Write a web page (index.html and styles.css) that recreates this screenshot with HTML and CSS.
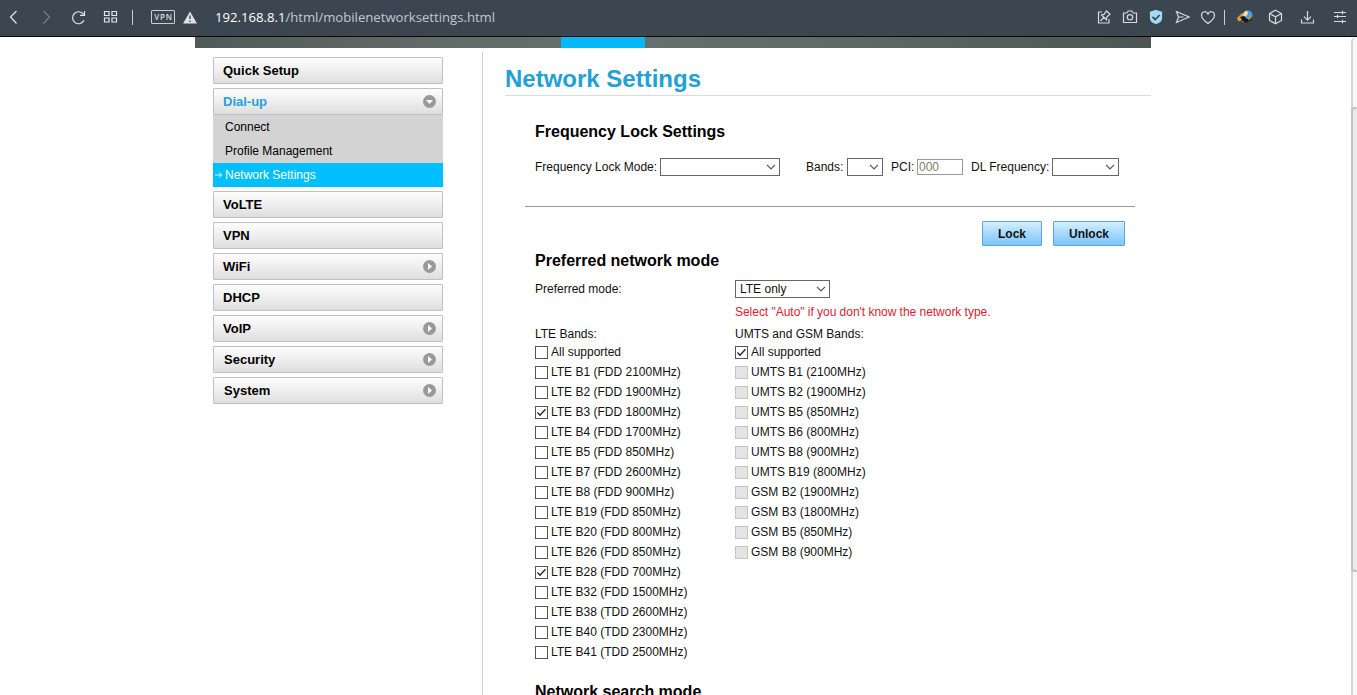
FILE: index.html
```html
<!DOCTYPE html>
<html lang="en">
<head>
<meta charset="utf-8">
<title>Network Settings</title>
<link rel="stylesheet" href="styles.css">
</head>
<body>
<header class="toolbar">
  <div class="nav">
    <svg class="ico" viewBox="0 0 16 16"><path d="M10.5 2 4.500 8l6 6.500"/></svg>
    <svg class="ico off" viewBox="0 0 16 16"><path d="M5.500 2l6 6-6 6.500"/></svg>
    <svg class="ico" viewBox="0 0 16 16"><path d="M14 11.300A6 6 0 1 1 13.500 5.300M14.500 2v4.300h-4.500"/></svg>
    <svg class="ico grid" viewBox="0 0 16 16"><path d="M2.500 2.500h4.500v4h-4.500zM10 2.500h4.500v4H10zM2.500 9h4.500v4h-4.500zM10 9h4.500v4H10z"/></svg>
  </div>
  <i class="bar"></i>
  <span class="vpn">VPN</span>
  <svg class="ico warn" viewBox="0 0 16 16"><path d="M8 2.500 15 14.500H1z" fill="#dde1e4" stroke="none"/><path d="M8 6.500v3.500M8 11.500v1.500" stroke="#56606a" stroke-width="1.600"/></svg>
  <span class="url"><b>192.168.8.1</b>/html/mobilenetworksettings.html</span>
  <div class="actions">
    <svg class="ico" viewBox="0 0 16 16"><path d="M6 3H2.500v11H13v-4M4.500 12l3.500-3.800M5.500 6l5 4.700 .3-2.700 3.200-2.800L10.500 2 8 5.400z"/></svg>
    <svg class="ico" viewBox="0 0 16 16"><path d="M1.500 4h3.200l1.500-2h3.600l1.500 2h3.200v9.500H1.500z"/><circle cx="8" cy="8.300" r="2.700"/></svg>
    <svg class="ico" viewBox="0 0 16 16"><path d="M8 1.500l5.500 1.700v6c0 3-2.500 4.300-5.500 5.300-3-1-5.500-2.300-5.500-5.300v-6z" fill="#a5daf7" stroke="#a5daf7"/><path d="M4.500 7.800l2.700 2.700 4.500-4.500" stroke="#354451" stroke-width="1.700"/></svg>
    <svg class="ico" viewBox="0 0 16 16"><path d="M2.500 2.500l12.500 5.500L2.500 13.500l2-5.500zM4.500 8h5"/></svg>
    <svg class="ico" viewBox="0 0 16 16"><path d="M8 14.500C4.500 12 1.500 9.500 1.500 6.500c0-4.500 5-5 6.500-1.500 1.500-3.500 6.500-3 6.500 1.500 0 3-3 5.500-6.500 8z"/></svg>
    <i class="bar"></i>
    <svg class="ico ext" viewBox="0 0 16 16"><g stroke="none"><path d="M0 9l5-5 4 1v4l-3 4-5-1z" fill="#e39b38"/><circle cx="11" cy="6" r="4.500" fill="#4b9fdc"/><path d="M7 3l3-1.500 1 3-2 3-3-1z" fill="#f5deb4"/><path d="M3 8l4-1 3 3 5-2v3l-4 1-1 2-4-2-4 1 3-2z" fill="#161719"/><path d="M11 8l4-1-1 3-3 1z" fill="#c48a3a"/></g></svg>
    <svg class="ico cube" viewBox="0 0 16 16"><path d="M8.500 1.300l6 3.200v7l-6 3.200-6-3.200v-7zM2.500 4.500l6 3.300 6-3.300M8.500 7.800v6.500"/></svg>
    <svg class="ico dl" viewBox="0 0 16 16"><path d="M8.500 2v9M5 7.700l3.500 3.500L12 7.700M2.500 10.500v3.500h12v-3.500"/></svg>
    <svg class="ico menu" viewBox="0 0 16 16"><path d="M2 3.500h12M2 7.500h12M2 12.500h12M10.500 1.800v3.400M5.500 5.800v3.400M10.500 10.800v3.400"/></svg>
  </div>
</header>

<div class="viewport">
  <div class="page">
    <div class="strip"><div class="tab"></div></div>
    <div class="columns">
      <nav class="side">
        <div class="item">Quick Setup</div>
        <div class="group">
          <div class="item open">Dial-up<svg class="arrow" viewBox="0 0 13 13"><circle cx="6.500" cy="6.500" r="6.500"/><path d="M3 5h7L6.500 9z"/></svg></div>
          <div class="sub">Connect</div>
          <div class="sub">Profile Management</div>
          <div class="sub active"><svg class="pointer" viewBox="0 0 9 8"><path d="M0 4h7.500M4.500 1l3 3-3 3"/></svg>Network Settings</div>
        </div>
        <div class="item">VoLTE</div>
        <div class="item">VPN</div>
        <div class="item">WiFi<svg class="arrow" viewBox="0 0 13 13"><circle cx="6.500" cy="6.500" r="6.500"/><path d="M5 3v7l4-3.500z"/></svg></div>
        <div class="item">DHCP</div>
        <div class="item">VoIP<svg class="arrow" viewBox="0 0 13 13"><circle cx="6.500" cy="6.500" r="6.500"/><path d="M5 3v7l4-3.500z"/></svg></div>
        <div class="item in">Security<svg class="arrow" viewBox="0 0 13 13"><circle cx="6.500" cy="6.500" r="6.500"/><path d="M5 3v7l4-3.500z"/></svg></div>
        <div class="item in">System<svg class="arrow" viewBox="0 0 13 13"><circle cx="6.500" cy="6.500" r="6.500"/><path d="M5 3v7l4-3.500z"/></svg></div>
      </nav>
      <main class="main">
        <h1>Network Settings</h1>
        <h2 class="freq">Frequency Lock Settings</h2>
        <div class="lockrow">
          <span class="w-mode">Frequency Lock Mode:</span>
          <div class="select s-mode"><svg viewBox="0 0 10 6"><path d="M1 .8l4 4 4-4"/></svg></div>
          <span class="w-bands">Bands:</span>
          <div class="select s-bands"><svg viewBox="0 0 10 6"><path d="M1 .8l4 4 4-4"/></svg></div>
          <span class="w-pci">PCI:</span>
          <div class="pci">000</div>
          <span class="w-dl">DL Frequency:</span>
          <div class="select s-dl"><svg viewBox="0 0 10 6"><path d="M1 .8l4 4 4-4"/></svg></div>
        </div>
        <div class="buttons"><div class="btn lock">Lock</div><div class="btn unlock">Unlock</div></div>
        <h2 class="pref">Preferred network mode</h2>
        <div class="two mode">
          <span>Preferred mode:</span>
          <div class="select s-lte">LTE only<svg viewBox="0 0 10 6"><path d="M1 .8l4 4 4-4"/></svg></div>
        </div>
        <div class="hint">Select "Auto" if you don't know the network type.</div>
        <div class="two bands">
          <div>
            <div class="cap">LTE Bands:</div>
            <div class="opt"><i class="box"></i>All supported</div>
            <div class="opt"><i class="box"></i>LTE B1 (FDD 2100MHz)</div>
            <div class="opt"><i class="box"></i>LTE B2 (FDD 1900MHz)</div>
            <div class="opt"><i class="box"><svg viewBox="0 0 11 11"><path d="M1.500 5.500L4 8.300 9.500 2.300"/></svg></i>LTE B3 (FDD 1800MHz)</div>
            <div class="opt"><i class="box"></i>LTE B4 (FDD 1700MHz)</div>
            <div class="opt"><i class="box"></i>LTE B5 (FDD 850MHz)</div>
            <div class="opt"><i class="box"></i>LTE B7 (FDD 2600MHz)</div>
            <div class="opt"><i class="box"></i>LTE B8 (FDD 900MHz)</div>
            <div class="opt"><i class="box"></i>LTE B19 (FDD 850MHz)</div>
            <div class="opt"><i class="box"></i>LTE B20 (FDD 800MHz)</div>
            <div class="opt"><i class="box"></i>LTE B26 (FDD 850MHz)</div>
            <div class="opt"><i class="box"><svg viewBox="0 0 11 11"><path d="M1.500 5.500L4 8.300 9.500 2.300"/></svg></i>LTE B28 (FDD 700MHz)</div>
            <div class="opt"><i class="box"></i>LTE B32 (FDD 1500MHz)</div>
            <div class="opt"><i class="box"></i>LTE B38 (TDD 2600MHz)</div>
            <div class="opt"><i class="box"></i>LTE B40 (TDD 2300MHz)</div>
            <div class="opt"><i class="box"></i>LTE B41 (TDD 2500MHz)</div>
          </div>
          <div>
            <div class="cap">UMTS and GSM Bands:</div>
            <div class="opt"><i class="box"><svg viewBox="0 0 11 11"><path d="M1.500 5.500L4 8.300 9.500 2.300"/></svg></i>All supported</div>
            <div class="opt"><i class="box dis"></i>UMTS B1 (2100MHz)</div>
            <div class="opt"><i class="box dis"></i>UMTS B2 (1900MHz)</div>
            <div class="opt"><i class="box dis"></i>UMTS B5 (850MHz)</div>
            <div class="opt"><i class="box dis"></i>UMTS B6 (800MHz)</div>
            <div class="opt"><i class="box dis"></i>UMTS B8 (900MHz)</div>
            <div class="opt"><i class="box dis"></i>UMTS B19 (800MHz)</div>
            <div class="opt"><i class="box dis"></i>GSM B2 (1900MHz)</div>
            <div class="opt"><i class="box dis"></i>GSM B3 (1800MHz)</div>
            <div class="opt"><i class="box dis"></i>GSM B5 (850MHz)</div>
            <div class="opt"><i class="box dis"></i>GSM B8 (900MHz)</div>
          </div>
        </div>
        <h2 class="search">Network search mode</h2>
      </main>
    </div>
  </div>
  <div class="scroll"><div class="thumb"></div></div>
</div>
</body>
</html>
```

FILE: styles.css
```css
* { box-sizing: border-box; }
html, body { margin: 0; height: 695px; overflow: hidden; background: #fff; }
body { font: 12px/16px "Liberation Sans", Arial, sans-serif; color: #111; display: flex; flex-direction: column; }

/* browser toolbar */
.toolbar { flex: none; height: 37px; background: #3c4650; border-bottom: 1px solid #080a0c; display: flex; align-items: center; padding: 0 9px 2px 6px; }
.ico { width: 16px; height: 16px; flex: none; display: block; fill: none; stroke: #e2e6e9; stroke-width: 1.2; }
.off { stroke: #76808a; }
.nav { display: flex; gap: 16px; }
.bar { width: 1px; height: 15px; background: #c9ced2; flex: none; }
.nav + .bar { margin-left: 14px; }
.vpn { margin-left: 18px; width: 24px; height: 14px; border: 1px solid #c9ced2; border-radius: 1px; color: #d5dadd; font: 600 8px/12px "Open Sans", sans-serif; letter-spacing: .7px; text-align: center; padding-left: 1px; }
.warn { margin-left: 7px; }
.url { margin-left: 17px; font: 13.14px/18px "Open Sans", sans-serif; color: #c3c9ce; white-space: nowrap; }
.url b { font-weight: 400; color: #fff; }
.actions { margin-left: auto; display: flex; align-items: center; gap: 10px; }
.actions .ico { stroke: #d5dadd; }
.actions .bar { margin-left: -2px; }
.ext { margin-left: 2px; }
.cube { margin-left: 4px; }
.dl { margin-left: 6px; }
.menu { margin-left: 7px; }

.viewport { flex: 1; min-height: 0; display: flex; justify-content: space-between; overflow: hidden; }
.page { width: 956px; margin-left: 195px; }
.strip { height: 11px; background: linear-gradient(90deg, #505a59, #626b69 25%, #67706e 45%, #626a69 65%, #4c5554); }
.tab { width: 84px; height: 11px; margin-left: 366px; background: #05b9f8; }
.columns { display: flex; margin-top: 4px; height: 643px; }

/* side menu */
.side { width: 288px; border-right: 1px solid #ccc; padding: 5px 39px 0 18px; display: flex; flex-direction: column; gap: 4px; }
.item { height: 27px; border: 1px solid #c0c0c0; border-radius: 1px; background: linear-gradient(#fdfdfd, #f0f0f0 45%, #dedede); padding: 0 6px 0 9px; font: bold 13px/25px "Liberation Sans", Arial, sans-serif; color: #000; display: flex; justify-content: space-between; align-items: center; }
.item.in { padding-left: 10px; }
.item.open { color: #26a0da; }
.arrow { width: 13px; height: 13px; fill: #999; }
.arrow path { fill: #fff; }
.sub { height: 24px; line-height: 24px; background: #d3d3d3; padding-left: 12px; color: #000; }
.sub.active { background: #00bfff; color: #fff; padding-left: 2px; display: flex; align-items: center; gap: 2px; }
.pointer { width: 8px; height: 8px; fill: none; stroke: #fff; stroke-width: 1; }

/* content */
.main { width: 668px; padding-left: 22px; }
h1, h2 { margin: 0; font-weight: bold; color: #000; white-space: nowrap; }
h1 { height: 44px; padding-top: 11px; font-size: 24px; line-height: 32px; color: #23a0d4; border-bottom: 1px solid #ddd; }
h2 { margin-left: 30px; font-size: 16px; line-height: 20px; }
.freq { margin-top: 26px; }
.lockrow { margin: 0 16px 0 20px; padding: 16px 16px 30px 10px; height: 65px; border-bottom: 1px solid #999; display: flex; align-items: center; white-space: nowrap; }
.w-mode { width: 125px; }
.w-bands { margin-left: 26px; width: 41px; }
.w-pci { margin-left: 8px; width: 26px; }
.w-dl { margin-left: 8px; width: 81px; }
.select { height: 18px; border: 1px solid #666; background: #fff; padding: 0 3px 0 4px; display: flex; align-items: center; line-height: 16px; }
.select svg { width: 10px; height: 6px; margin-left: auto; fill: none; stroke: #555; stroke-width: 1.2; }
.s-mode { width: 120px; }
.s-bands { width: 36px; }
.s-dl { width: 67px; }
.s-lte { width: 95px; }
.pci { width: 46px; height: 16px; border: 1px solid #999; line-height: 14px; padding-left: 1px; color: #808068; }
.buttons { margin: 14px 26px 0 0; display: flex; justify-content: flex-end; gap: 11px; }
.btn { height: 25px; border: 1px solid #5ea6d6; border-radius: 1px; background: linear-gradient(#d6effe, #a5d9fc 50%, #7cc6fb); font-weight: bold; line-height: 24px; text-align: center; color: #111; }
.lock { width: 60px; }
.unlock { width: 72px; }
.pref { margin-top: 5px; }
.two { display: grid; grid-template-columns: 200px 1fr; margin-left: 30px; }
.mode { margin-top: 9px; align-items: center; }
.hint { margin: 6px 0 0 230px; color: #e02030; letter-spacing: -.03px; }
.bands { margin-top: 6px; }
.cap { height: 16px; }
.opt { height: 20px; display: flex; align-items: center; gap: 3px; white-space: nowrap; }
.box { width: 13px; height: 13px; border: 1px solid #555; background: #fff; flex: none; }
.box svg { display: block; width: 11px; height: 11px; fill: none; stroke: #222; stroke-width: 1.3; }
.box.dis { border-color: #c4c4c4; background: #e4e4e4; }
.search { margin-top: 20px; }

/* scrollbar at the window edge */
.scroll { width: 6px; background: #f7f7f7; border-left: 2px solid #d6d6d6; border-radius: 5px 0 0 0; padding-top: 70px; }
.thumb { height: 465px; margin-left: -2px; border: 2px solid #c4c4c4; border-right: 0; border-radius: 4px 0 0 4px; background: #ebebeb; }
```
